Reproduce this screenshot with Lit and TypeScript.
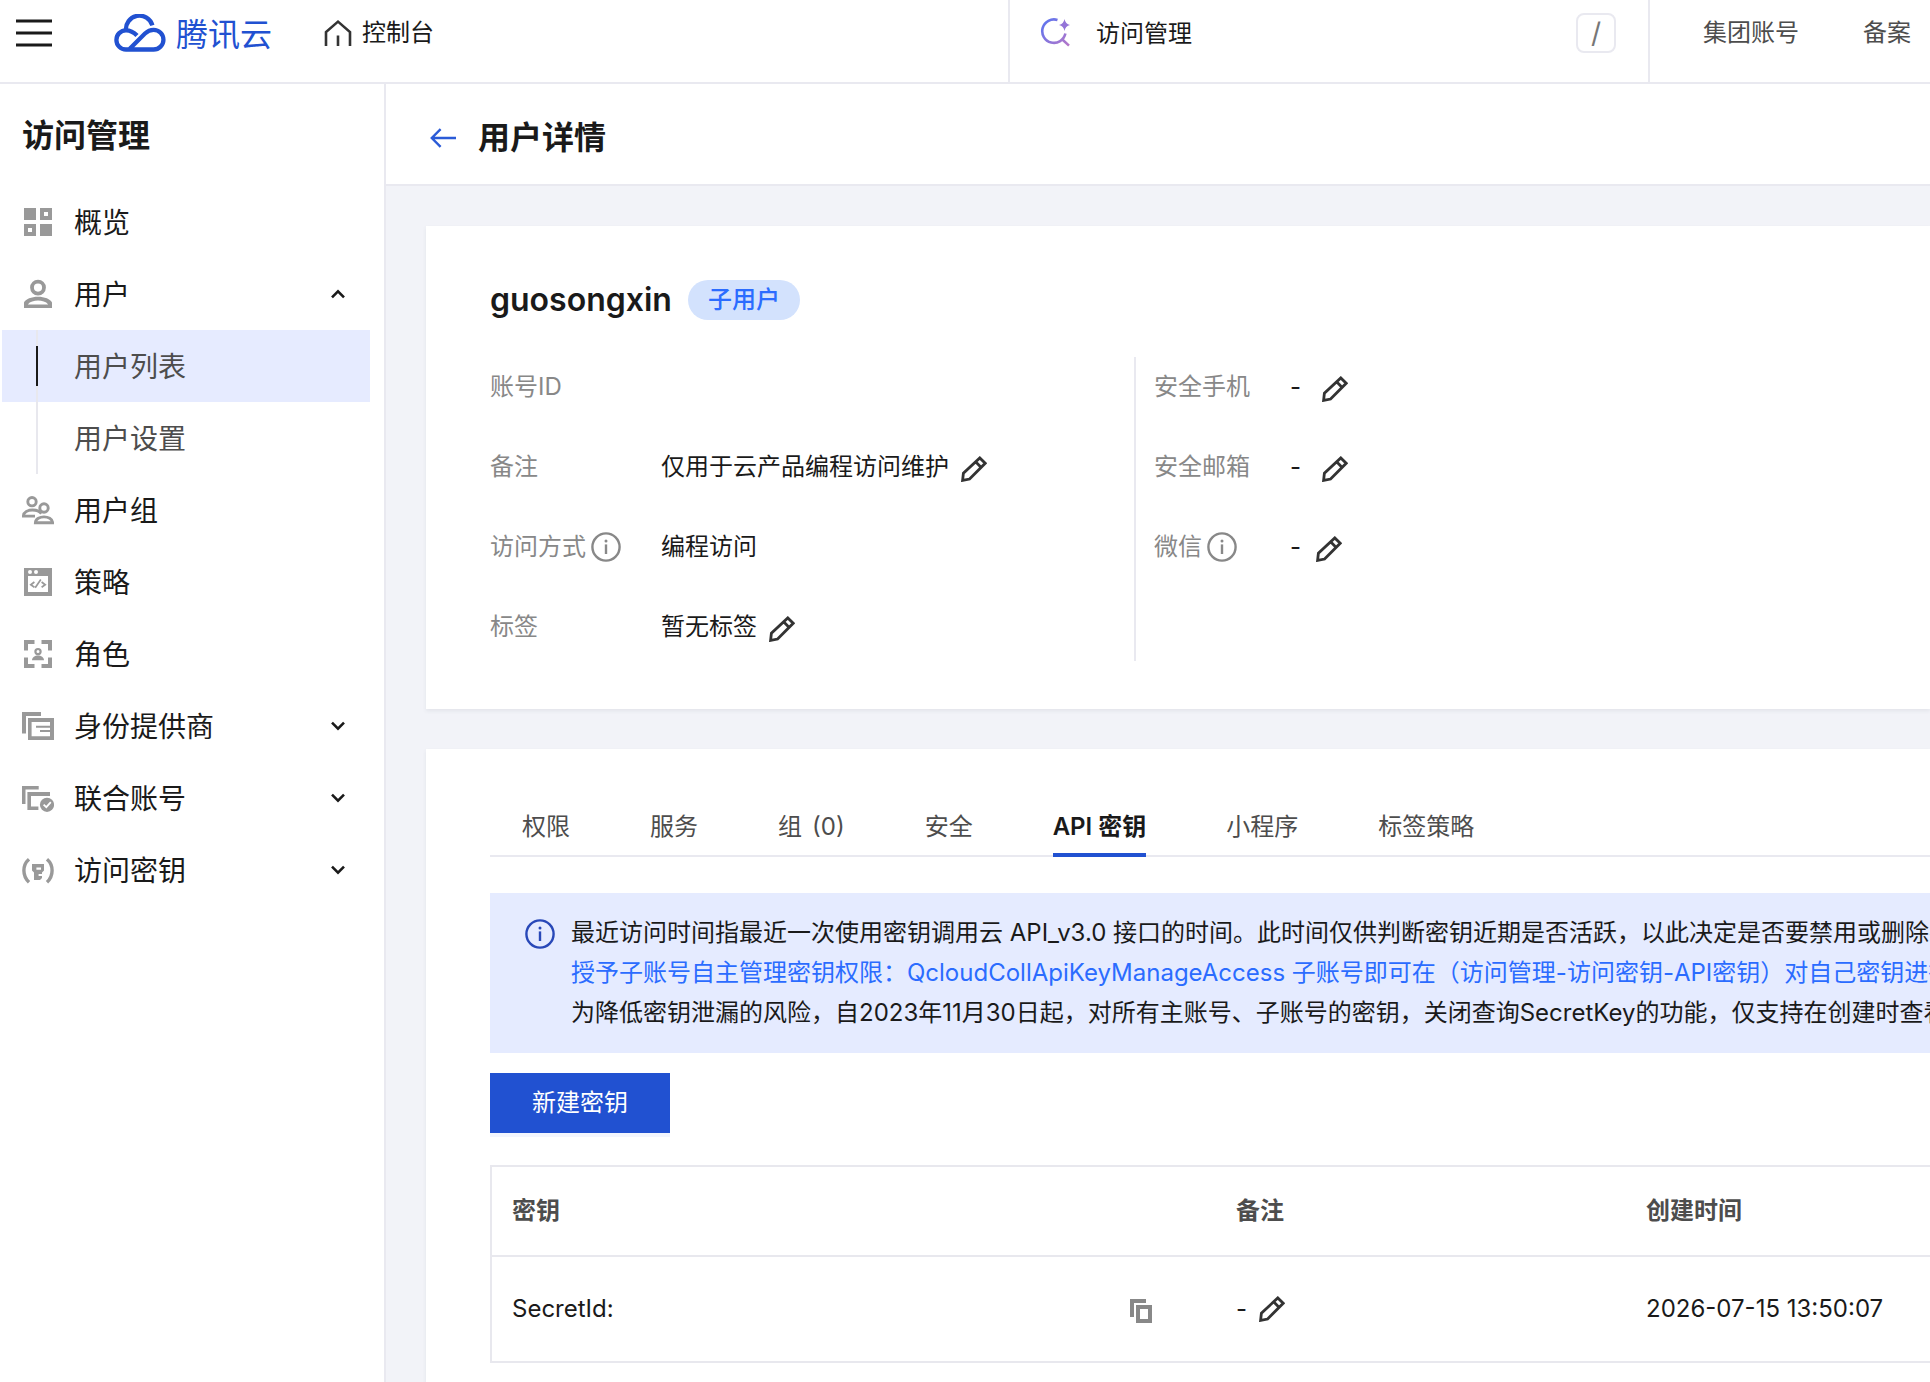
import { LitElement, html, css, svg, nothing, TemplateResult } from "lit";
import { customElement, property } from "lit/decorators.js";
import { classMap } from "lit/directives/class-map.js";

interface NavItem {
  label: string;
  icon: string;
  open?: boolean;
  expandable?: boolean;
  children?: { label: string; active: boolean }[];
}

const NAV: NavItem[] = [
  { label: "概览", icon: "grid" },
  {
    label: "用户",
    icon: "user",
    expandable: true,
    open: true,
    children: [
      { label: "用户列表", active: true },
      { label: "用户设置", active: false },
    ],
  },
  { label: "用户组", icon: "group" },
  { label: "策略", icon: "policy" },
  { label: "角色", icon: "role" },
  { label: "身份提供商", icon: "idp", expandable: true },
  { label: "联合账号", icon: "federated", expandable: true },
  { label: "访问密钥", icon: "key", expandable: true },
];

const ICONS: Record<string, { w: number; h: number; body: unknown }> = {
  menu: {
    w: 36, h: 28,
    body: svg`<path d="M0 2H36M0 14H36M0 26H36" fill="none" stroke="currentColor" stroke-width="2.8"/>`,
  },
  cloud: {
    w: 52, h: 38,
    body: svg`<g fill="none" stroke="currentColor" stroke-width="4.3">
      <path d="M12 16.5A13.5 13.5 0 0 1 38.4 11.4"/>
      <path d="M23 21.6C19.6 18 16.4 16.3 12 16.3A9.6 9.6 0 0 0 12 35.5H39.6A9.85 9.85 0 0 0 39.6 15.8C36 15.8 33.6 17 31 19.5L15.5 35"/></g>`,
  },
  home: {
    w: 28, h: 28,
    body: svg`<path d="M2 27V13L14 2.6L26 13V27M14 27V16.5" fill="none" stroke="currentColor" stroke-width="2.6"/>`,
  },
  search: {
    w: 32, h: 32,
    body: svg`<defs><linearGradient id="g" x1="0" y1="0" x2="1" y2="1">
      <stop offset="0" stop-color="#5b74f0"/><stop offset="1" stop-color="#b577c8"/></linearGradient></defs>
      <path d="M17.5 3A11.7 11.7 0 1 0 25.4 16.6M21.8 22L29 28.6" fill="none" stroke="url(#g)" stroke-width="2.6"/>
      <path d="M24.5 2Q25.4 7 30 8Q25.4 9 24.5 14Q23.6 9 19 8Q23.6 7 24.5 2Z" fill="#9474d8"/>`,
  },
  back: {
    w: 26, h: 20,
    body: svg`<path d="M26 10H2M10.6 1.2L1.8 10L10.6 18.8" fill="none" stroke="currentColor" stroke-width="2.4"/>`,
  },
  up: {
    w: 14, h: 10,
    body: svg`<path d="M1 8.4L7 2.4L13 8.4" fill="none" stroke="currentColor" stroke-width="2.6"/>`,
  },
  down: {
    w: 14, h: 10,
    body: svg`<path d="M1 1.6L7 7.6L13 1.6" fill="none" stroke="currentColor" stroke-width="2.6"/>`,
  },
  edit: {
    w: 26, h: 26,
    body: svg`<path d="M1.6 24.4L2.4 17.2L18.8 1.9L24.2 7.3L8.6 23ZM14.6 5.8L20.2 11.4" fill="none" stroke="currentColor" stroke-width="2.8"/>`,
  },
  info: {
    w: 30, h: 30,
    body: svg`<circle cx="15" cy="15" r="13.6" fill="none" stroke="currentColor" stroke-width="2.4"/>
      <path d="M15 12.4V22" stroke="currentColor" stroke-width="2.4"/><circle cx="15" cy="8.9" r="1.5" fill="currentColor"/>`,
  },
  copy: {
    w: 22, h: 24,
    body: svg`<path d="M0 0H16V4H4V18H0Z" fill="currentColor"/>
      <path fill-rule="evenodd" d="M6 6H22V24H6ZM10 10V20H18V10Z" fill="currentColor"/>`,
  },
  grid: {
    w: 32, h: 32,
    body: svg`<path fill-rule="evenodd" fill="currentColor" d="M2 2H14V14H2ZM18 2H30V14H18ZM22 6V10H26V6ZM2 18H14V30H2ZM6 22V26H10V22ZM18 18H30V30H18Z"/>`,
  },
  user: {
    w: 32, h: 32,
    body: svg`<circle cx="16" cy="9.6" r="6" fill="none" stroke="currentColor" stroke-width="3.8"/>
      <path fill-rule="evenodd" fill="currentColor" d="M2 30V24.6C3.4 21 9.6 18.8 16 18.8S28.6 21 30 24.6V30ZM5.8 26.4H26.2C24 23.8 20 22.6 16 22.6S8 23.8 5.8 26.4Z"/>`,
  },
  group: {
    w: 32, h: 32,
    body: svg`<g fill="none" stroke="currentColor" stroke-width="2.9">
      <circle cx="10" cy="7.7" r="4.2"/><circle cx="22" cy="14" r="4.2"/>
      <path d="M13 22.1H1.4C1.6 18 6 16 10.5 16C14 16 17.6 17.2 19.4 19.6"/>
      <path d="M13.4 28.7C13.6 24.8 18 22.9 22 22.9S30.4 24.8 30.6 28.7Z"/></g>`,
  },
  policy: {
    w: 32, h: 32,
    body: svg`<path fill-rule="evenodd" fill="currentColor" d="M2 2H30V30H2ZM6 10V26H26V10ZM8 4A2 2 0 1 0 8 8A2 2 0 1 0 8 4ZM14 4A2 2 0 1 0 14 8A2 2 0 1 0 14 4Z"/>
      <path d="M12.4 16L8.8 18.7L12.4 21.2M18.8 13.6L13.2 21.8M19.6 16L23.2 18.7L19.6 21.2" fill="none" stroke="currentColor" stroke-width="1.7"/>`,
  },
  role: {
    w: 32, h: 32,
    body: svg`<path fill="none" stroke="currentColor" stroke-width="4" d="M4 12.5V4H12.5M19.5 4H28V12.5M28 19.5V28H19.5M12.5 28H4V19.5"/>
      <circle cx="16" cy="13.6" r="2.6" fill="none" stroke="currentColor" stroke-width="2.2"/>
      <path fill="currentColor" d="M10 22.2C10 19 13 17.4 16 17.4S22 19 22 22.2Z"/>`,
  },
  idp: {
    w: 32, h: 32,
    body: svg`<path fill="currentColor" d="M0 2H19V6H4V23.5H0Z"/>
      <path fill-rule="evenodd" fill="currentColor" d="M6 8H32V30H6ZM9.6 12V26.2H28V12Z"/>
      <path d="M14 16.8H28M18 21H28" stroke="currentColor" stroke-width="2"/>`,
  },
  federated: {
    w: 32, h: 32,
    body: svg`<path fill="currentColor" d="M0 4H16.7V7.5H3.5V22H0Z"/>
      <path fill="currentColor" d="M5.4 10H28V14H9V24.4H16.4V28H5.4Z"/>
      <circle cx="25" cy="22.8" r="7.1" fill="currentColor"/>
      <path d="M21.6 22.6L24.3 25.2L28.8 20.2" fill="none" stroke="#fff" stroke-width="1.8"/>`,
  },
  key: {
    w: 32, h: 32,
    body: svg`<path fill="none" stroke="currentColor" stroke-width="3.4" d="M7 5.2C0.2 11 0.2 22 7 28.2M25 5.2C31.8 11 31.8 22 25 28.2"/>
      <path fill-rule="evenodd" fill="currentColor" d="M10 10H22V16.4L20 18.4V20H16.6V22H20V24L18 26H12V18.4L10 16.4ZM14.4 13.4V15.8H19V13.4Z"/>`,
  },
};

@customElement("ui-icon")
class UiIcon extends LitElement {
  @property() name = "";

  static styles = css`
    :host { display: inline-flex; flex: none; }
    svg { display: block; }
  `;

  render() {
    const icon = ICONS[this.name];
    if (!icon) return nothing;
    return html`<svg width=${icon.w} height=${icon.h} viewBox="0 0 ${icon.w} ${icon.h}" aria-hidden="true">${icon.body}</svg>`;
  }
}

@customElement("app-header")
class AppHeader extends LitElement {
  static styles = css`
    :host { display: block; }
    .bar {
      display: flex;
      box-sizing: border-box;
      height: 84px;
      border-bottom: 2px solid #e9e9f0;
      background: #fff;
      overflow: hidden;
    }
    .start {
      display: flex;
      flex: 1 1 0;
      min-width: 0;
      padding: 0 16px 16px;
      align-items: center;
    }
    .icon-btn { display: flex; padding: 0; border: 0; background: none; color: #1a1a1a; cursor: pointer; }
    .brand {
      display: flex;
      align-items: center;
      gap: 10px;
      margin-left: 62px;
      color: #2151d1;
      font-size: 32px;
      line-height: 40px;
      text-decoration: none;
    }
    .brand span { padding-top: 4px; }
    .console {
      display: flex;
      align-items: center;
      gap: 10px;
      margin-left: 52px;
      color: #1a1a1a;
      font-size: 24px;
      line-height: 40px;
      text-decoration: none;
    }
    .console ui-icon { color: #333; }
    .search {
      display: flex;
      flex: 0 1 642px;
      box-sizing: border-box;
      align-items: center;
      padding: 0 32px 16px 30px;
      border: solid #e9e9f0;
      border-width: 0 2px 0 2px;
    }
    .search input {
      flex: 1;
      min-width: 0;
      margin-left: 24px;
      padding: 2px 0 0;
      border: 0;
      outline: 0;
      background: none;
      color: #1a1a1a;
      font: inherit;
      font-size: 24px;
      line-height: 40px;
    }
    .slash {
      box-sizing: border-box;
      width: 40px;
      height: 40px;
      border: 2px solid #e9e9f0;
      border-radius: 8px;
      color: #777;
      font: inherit;
      font-size: 28px;
      line-height: 36px;
      text-align: center;
    }
    .links {
      display: flex;
      flex: 0 0 280px;
      box-sizing: border-box;
      gap: 64px;
      align-items: center;
      padding: 0 0 16px 53px;
      white-space: nowrap;
    }
    .links a { color: #4d4d4d; font-size: 24px; line-height: 40px; text-decoration: none; }
  `;

  render() {
    return html`<header class="bar">
      <div class="start">
        <button class="icon-btn" aria-label="菜单"><ui-icon name="menu"></ui-icon></button>
        <a class="brand" href="#"><ui-icon name="cloud"></ui-icon><span>腾讯云</span></a>
        <a class="console" href="#"><ui-icon name="home"></ui-icon>控制台</a>
      </div>
      <div class="search">
        <ui-icon name="search"></ui-icon>
        <input type="text" aria-label="搜索" .value=${"访问管理"} />
        <kbd class="slash">/</kbd>
      </div>
      <nav class="links"><a href="#">集团账号</a><a href="#">备案</a></nav>
    </header>`;
  }
}

@customElement("side-nav")
class SideNav extends LitElement {
  static styles = css`
    :host { display: block; box-sizing: border-box; border-right: 2px solid #e9e9f0; background: #fff; }
    .title { margin: 0; padding: 32px 22px 30px; color: #1a1a1a; font-size: 32px; font-weight: 600; line-height: 40px; }
    ul { margin: 0; padding: 0; list-style: none; }
    .list { padding: 0 14px 0 2px; }
    .item {
      display: flex;
      align-items: center;
      gap: 20px;
      box-sizing: border-box;
      width: 100%;
      height: 72px;
      padding: 0 25px 0 20px;
      border: 0;
      background: none;
      color: #1a1a1a;
      font: inherit;
      font-size: 28px;
      line-height: 40px;
      text-align: left;
      text-decoration: none;
      cursor: pointer;
    }
    .glyph { color: #999; }
    .label { flex: 1; padding-top: 2px; }
    .sub {
      display: flex;
      align-items: center;
      gap: 36px;
      height: 72px;
      padding-left: 34px;
      color: #4d4d4d;
      font-size: 28px;
      line-height: 40px;
      text-decoration: none;
    }
    .rail { display: flex; align-items: center; align-self: stretch; width: 2px; background: #e8e8ee; }
    .active { background: #e6ebff; }
    .active .rail::before { content: ""; width: 2px; height: 40px; background: #1a1a1a; }
  `;

  private renderItem(item: NavItem): TemplateResult {
    const inner = html`<ui-icon class="glyph" name=${item.icon}></ui-icon><span class="label">${item.label}</span>`;
    return html`<li>
      ${item.expandable
        ? html`<button class="item" aria-expanded=${item.open ? "true" : "false"}>
            ${inner}<ui-icon name=${item.open ? "up" : "down"}></ui-icon>
          </button>`
        : html`<a class="item" href="#">${inner}</a>`}
      ${item.children
        ? html`<ul>
            ${item.children.map(
              (c) => html`<li>
                <a class=${classMap({ sub: true, active: c.active })} href="#"
                  ><span class="rail"></span><span class="label">${c.label}</span></a
                >
              </li>`
            )}
          </ul>`
        : nothing}
    </li>`;
  }

  render() {
    return html`<nav>
      <h2 class="title">访问管理</h2>
      <ul class="list">${NAV.map((i) => this.renderItem(i))}</ul>
    </nav>`;
  }
}

@customElement("user-card")
class UserCard extends LitElement {
  static styles = css`
    :host { display: block; padding: 54px 64px 48px; background: #fff; box-shadow: 0 2px 4px rgba(54, 58, 80, 0.08); }
    .head { display: flex; align-items: center; gap: 16px; margin-bottom: 37px; }
    h2 { margin: 0; color: #1a1a1a; font-size: 32px; font-weight: 600; line-height: 40px; }
    .badge {
      padding: 0 20px;
      border-radius: 20px;
      background: #d3e2fd;
      color: #2b6cff;
      font-size: 24px;
      font-weight: 500;
      line-height: 40px;
    }
    .cols { display: grid; grid-template-columns: 644px 1fr; }
    dl { display: grid; grid-auto-rows: 40px; row-gap: 40px; box-sizing: border-box; margin: 0; padding: 10px 0 14px; }
    .left { grid-template-columns: 171px 1fr; }
    .right { grid-template-columns: 136px 1fr; padding-left: 18px; border-left: 2px solid #e9e9f0; }
    dt, dd { display: flex; align-items: center; margin: 0; font-size: 24px; line-height: 40px; white-space: nowrap; }
    dt { gap: 5px; color: #888; }
    dd { gap: 12px; color: #1a1a1a; }
    .near { gap: 15px; }
    .wide { gap: 21px; }
    button { display: flex; padding: 4px 0 0; border: 0; background: none; color: #333; cursor: pointer; }
  `;

  private edit() {
    return html`<button aria-label="编辑"><ui-icon name="edit"></ui-icon></button>`;
  }

  render() {
    return html`<section>
      <div class="head"><h2>guosongxin</h2><span class="badge">子用户</span></div>
      <div class="cols">
        <dl class="left">
          <dt>账号ID</dt><dd></dd>
          <dt>备注</dt><dd>仅用于云产品编程访问维护${this.edit()}</dd>
          <dt>访问方式<ui-icon name="info"></ui-icon></dt><dd>编程访问</dd>
          <dt>标签</dt><dd>暂无标签${this.edit()}</dd>
        </dl>
        <dl class="right">
          <dt>安全手机</dt><dd class="wide">-${this.edit()}</dd>
          <dt>安全邮箱</dt><dd class="wide">-${this.edit()}</dd>
          <dt>微信<ui-icon name="info"></ui-icon></dt><dd class="near">-${this.edit()}</dd>
        </dl>
      </div>
    </section>`;
  }
}

@customElement("key-panel")
class KeyPanel extends LitElement {
  static styles = css`
    :host { display: block; padding: 58px 0 16px 64px; background: #fff; box-shadow: 0 2px 4px rgba(54, 58, 80, 0.08); overflow: hidden; }
    .tabs { display: flex; gap: 80px; padding-left: 32px; border-bottom: 2px solid #e9e9f0; }
    .tab {
      display: flex;
      gap: 10px;
      margin-bottom: -2px;
      padding: 0 0 6px;
      border: 0;
      border-bottom: 4px solid transparent;
      background: none;
      color: #4d4d4d;
      font: inherit;
      font-size: 24px;
      line-height: 40px;
      white-space: nowrap;
      cursor: pointer;
    }
    .current { border-bottom-color: #2151d1; color: #1a1a1a; font-weight: 600; }
    .notice {
      display: flex;
      gap: 16px;
      margin-top: 36px;
      padding: 20px 0 20px 35px;
      background: #e5ebff;
      color: #1a1a1a;
      font-size: 24px;
      line-height: 40px;
      white-space: nowrap;
      overflow: hidden;
    }
    .notice ui-icon { padding-top: 6px; color: #2848b8; }
    .notice p { margin: 0; }
    .notice a { color: #2b6cff; text-decoration: none; }
    .create {
      display: block;
      height: 60px;
      margin: 20px 0 32px;
      padding: 0 42px;
      border: 0;
      background: #2151d1;
      box-shadow: 0 4px 0 #f2f5fe;
      color: #fff;
      font: inherit;
      font-size: 24px;
      line-height: 40px;
      cursor: pointer;
    }
    .frame { border: solid #e8e8ee; border-width: 2px 0 2px 2px; }
    table { width: 100%; border-collapse: collapse; table-layout: fixed; font-size: 24px; line-height: 40px; text-align: left; white-space: nowrap; }
    .c-key { width: 724px; }
    .c-note { width: 410px; }
    th { height: 88px; padding: 0 20px; color: #4d4d4d; font-weight: 600; }
    td { height: 104px; padding: 0 20px; border-top: 2px solid #e8e8ee; color: #1a1a1a; }
    .cell { display: flex; align-items: center; gap: 12px; }
    .key { justify-content: space-between; padding-right: 44px; }
    .cell button { display: flex; padding: 0; border: 0; background: none; color: #333; cursor: pointer; }
    .key button { padding-top: 4px; color: #888; }
  `;

  render() {
    return html`<section>
      <div class="tabs" role="tablist">
        <button class="tab" role="tab">权限</button>
        <button class="tab" role="tab">服务</button>
        <button class="tab" role="tab"><span>组</span><span>(0)</span></button>
        <button class="tab" role="tab">安全</button>
        <button class="tab current" role="tab" aria-selected="true">API 密钥</button>
        <button class="tab" role="tab">小程序</button>
        <button class="tab" role="tab">标签策略</button>
      </div>
      <div class="notice">
        <ui-icon name="info"></ui-icon>
        <div>
          <p>最近访问时间指最近一次使用密钥调用云 API_v3.0 接口的时间。此时间仅供判断密钥近期是否活跃，以此决定是否要禁用或删除密钥</p>
          <p><a href="#">授予子账号自主管理密钥权限：QcloudCollApiKeyManageAccess 子账号即可在（访问管理-访问密钥-API密钥）对自己密钥进行</a></p>
          <p>为降低密钥泄漏的风险，自2023年11月30日起，对所有主账号、子账号的密钥，关闭查询SecretKey的功能，仅支持在创建时查看</p>
        </div>
      </div>
      <button class="create">新建密钥</button>
      <div class="frame">
        <table>
          <colgroup><col class="c-key" /><col class="c-note" /><col /></colgroup>
          <thead><tr><th>密钥</th><th>备注</th><th>创建时间</th></tr></thead>
          <tbody>
            <tr>
              <td><div class="cell key">SecretId:<button aria-label="复制"><ui-icon name="copy"></ui-icon></button></div></td>
              <td><div class="cell">-<button aria-label="编辑"><ui-icon name="edit"></ui-icon></button></div></td>
              <td>2026-07-15 13:50:07</td>
            </tr>
          </tbody>
        </table>
      </div>
    </section>`;
  }
}

@customElement("app-root")
class AppRoot extends LitElement {
  static styles = css`
    :host {
      display: flex;
      flex-direction: column;
      min-height: 100vh;
      background: #f2f3f8;
      color: #1a1a1a;
      font-family: Inter, "Noto Sans CJK SC", sans-serif;
      font-size: 24px;
      overflow: hidden;
    }
    .body { display: grid; flex: 1; grid-template-columns: 386px minmax(0, 1fr); }
    main { display: flex; flex-direction: column; min-width: 0; }
    .page-head {
      display: flex;
      align-items: center;
      gap: 22px;
      box-sizing: border-box;
      height: 102px;
      padding: 8px 44px 0;
      border-bottom: 2px solid #e9e9f0;
      background: #fff;
    }
    .back { display: flex; color: #2b5bd7; }
    h1 { margin: 0; font-size: 32px; font-weight: 600; line-height: 40px; }
    .cards { display: flex; flex: 1; flex-direction: column; gap: 40px; padding: 40px 0 0 40px; }
    key-panel { flex: 1; }
  `;

  render() {
    return html`
      <app-header></app-header>
      <div class="body">
        <side-nav></side-nav>
        <main>
          <div class="page-head">
            <a class="back" href="#" aria-label="返回"><ui-icon name="back"></ui-icon></a>
            <h1>用户详情</h1>
          </div>
          <div class="cards">
            <user-card></user-card>
            <key-panel></key-panel>
          </div>
        </main>
      </div>
    `;
  }
}
